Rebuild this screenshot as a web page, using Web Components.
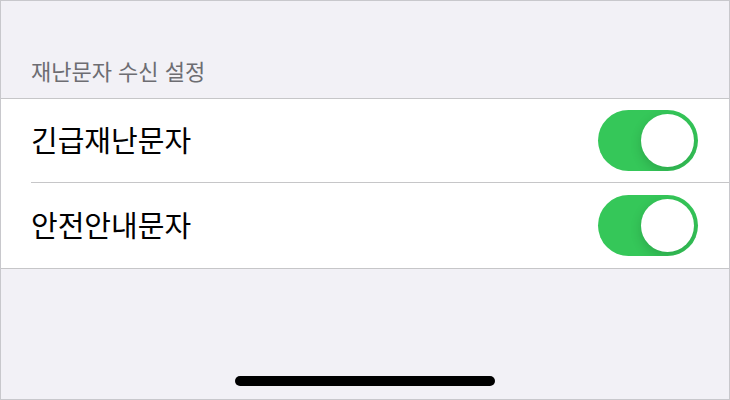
<!DOCTYPE html>
<html lang="ko">
<head>
<meta charset="utf-8">
<meta name="viewport" content="width=device-width, initial-scale=1">
<title>재난문자 수신 설정</title>
<style>
body { margin: 0; font-family: "Noto Sans CJK KR", sans-serif; }
</style>
</head>
<body>
<alert-screen></alert-screen>
<script>
class ToggleRow extends HTMLElement {
  connectedCallback() {
    const root = this.attachShadow({ mode: "open" });
    root.innerHTML = `
      <style>
        :host { display: block; padding-left: 30px; background: #fff; }
        label { display: flex; align-items: center; justify-content: space-between;
          box-sizing: border-box; min-height: 85px; padding-right: 31px;
          font-size: 29px; line-height: 40px; color: #000; }
        span { padding-bottom: 4px; }
        :host(:not(:last-child)) label { min-height: 84px; border-bottom: 1px solid #c6c6c8; }
        input { appearance: none; flex: none; display: flex; justify-content: flex-end;
          box-sizing: border-box; width: 100px; height: 61px; margin: 0; padding: 4px;
          border-radius: 31px; background: #e9e9eb; overflow: hidden; cursor: pointer; }
        input:not(:checked) { justify-content: flex-start; }
        input:checked { background: #35c759; }
        input::before { content: ""; width: 53px; height: 53px; border-radius: 50%;
          background: #fff; box-shadow: 0 4px 12px rgba(0, 0, 0, .16); }
      </style>
      <label for="toggle"><span><slot></slot></span><input id="toggle" type="checkbox" role="switch" checked></label>`;
  }
}
class SettingsGroup extends HTMLElement {
  connectedCallback() {
    const root = this.attachShadow({ mode: "open" });
    root.innerHTML = `
      <style>
        :host { display: block; }
        header { padding: 0 30px 12px; font-size: 22px; line-height: 32px; color: #6d6d72; }
        .rows { border: solid #c6c6c8; border-width: 1px 0; }
      </style>
      <header><slot name="title"></slot></header>
      <div class="rows"><slot></slot></div>`;
  }
}
class HomeBar extends HTMLElement {
  connectedCallback() {
    this.attachShadow({ mode: "open" }).innerHTML = `
      <style>:host { display: block; width: 260px; height: 10px; border-radius: 5px; background: #000; }</style>`;
  }
}
class AlertScreen extends HTMLElement {
  connectedCallback() {
    this.attachShadow({ mode: "open" }).innerHTML = `
      <style>
        :host { display: flex; flex-direction: column; box-sizing: border-box; min-height: 100vh;
          padding: 53px 0 13px; border: 1px solid #c8c8cc; background: #f2f1f6; }
        home-bar { margin: auto auto 0; }
      </style>
      <settings-group>
        <span slot="title">재난문자 수신 설정</span>
        <toggle-row>긴급재난문자</toggle-row>
        <toggle-row>안전안내문자</toggle-row>
      </settings-group>
      <home-bar></home-bar>`;
  }
}
customElements.define("toggle-row", ToggleRow);
customElements.define("settings-group", SettingsGroup);
customElements.define("home-bar", HomeBar);
customElements.define("alert-screen", AlertScreen);
</script>
</body>
</html>
